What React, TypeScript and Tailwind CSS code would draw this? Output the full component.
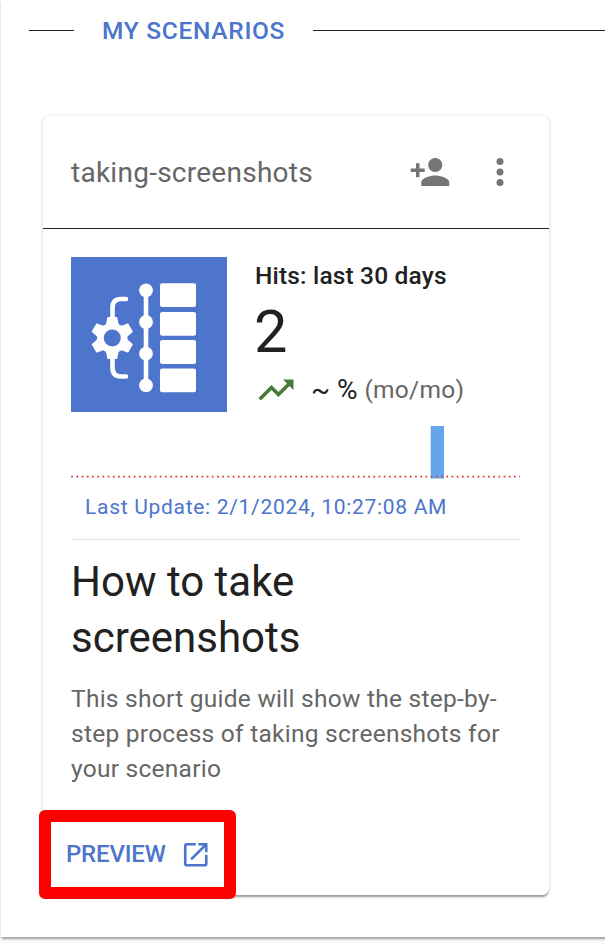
const ELEVATION =
  'shadow-[0_3.5px_1.75px_-1.75px_rgba(0,0,0,0.2),0_1.75px_1.75px_0_rgba(0,0,0,0.14),0_1.75px_5.25px_0_rgba(0,0,0,0.12)]';

function PersonAddIcon() {
  return (
    <svg viewBox="0 0 24 24" className="size-[42px] fill-[#757575]">
      <path d="M15 12c2.21 0 4-1.79 4-4s-1.79-4-4-4-4 1.790-4 4 1.790 4 4 4zm-9-2V7H4v3H1v2h3v3h2v-3h3v-2H6zm9 4c-2.670 0-8 1.340-8 4v2h16v-2c0-2.660-5.330-4-8-4z" />
    </svg>
  );
}

function MoreIcon() {
  return (
    <svg viewBox="0 0 24 24" className="size-[42px] fill-[#757575]">
      <circle cx="12" cy="6" r="2" />
      <circle cx="12" cy="12" r="2" />
      <circle cx="12" cy="18" r="2" />
    </svg>
  );
}

function TrendingUpIcon() {
  return (
    <svg viewBox="0 0 24 24" className="size-[42px] fill-[#467a39]">
      <path d="m16 6 2.290 2.290-4.880 4.880-4-4L2 16.590 3.410 18l6-6 4 4 6.300-6.290L22 12V6z" />
    </svg>
  );
}

function OpenInNewIcon() {
  return (
    <svg viewBox="0 0 24 24" className="size-[31.5px] shrink-0 fill-[#4c75cb]">
      <path d="M19 19H5V5h7V3H5c-1.110 0-2 .9-2 2v14c0 1.100.890 2 2 2h14c1.100 0 2-.9 2-2v-7h-2v7zM14 3v2h3.590l-9.830 9.830 1.410 1.410L19 6.410V10h2V3h-7z" />
    </svg>
  );
}

function ScenarioLogo() {
  return (
    <svg viewBox="0 0 156 155" className="h-[155px] w-[156px] shrink-0 bg-[#4c75cb]">
      <g fill="none" stroke="#fff" strokeWidth="4.6" strokeLinecap="round">
        <path d="M41.500 62V51Q41.500 42 50 42H55" />
        <path d="M41.500 100V110.500Q41.500 119.500 50 119.500H55" />
        <path d="M75 33V128" />
      </g>
      <g transform="translate(41.300 81) scale(0.980)" fill="#fff">
        <circle r="14.8" />
        {[0, 60, 120, 180, 240, 300].map((angle) => (
          <path
            key={angle}
            transform={`rotate(${angle})`}
            d="M-4.400-21.500H4.400Q5-21.500 5.100-21L6.200-15Q6.500-13.800 8-13L0-8-8-13Q-6.500-13.800-6.200-15L-5.100-21Q-5-21.500-4.400-21.500Z"
          />
        ))}
        <circle r="8.700" fill="#4c75cb" />
      </g>
      <g fill="#fff">
        {[33.3, 65, 96.7, 128.3].map((y) => (
          <circle key={y} cx="75" cy={y} r="6.900" />
        ))}
        {[26.2, 54.9, 83, 111.4].map((y) => (
          <rect key={y} x="89" y={y} width="36" height="23.900" rx="2" />
        ))}
      </g>
    </svg>
  );
}

function HitsChart() {
  return (
    <svg viewBox="0 0 450 78" className="block h-[78px] w-[450px]">
      <rect x="359.700" y="14" width="13.300" height="52.500" fill="#64a6ec" />
      <path d="M0.200 64.700H449" stroke="#d0413d" strokeWidth="1.750" strokeDasharray="1.750 3.460" />
    </svg>
  );
}

export default function App() {
  return (
    <div className="h-[945px] w-[605px] overflow-hidden bg-[#fefefe] pl-px font-[Roboto,sans-serif] text-[#212121]">
      <main className={`flex h-[937px] w-[700px] flex-col bg-white ${ELEVATION}`}>
        <div className="flex h-[60px] items-center pl-7">
          <div className="h-px w-[45px] bg-[#212121]" />
          <h2 className="mx-7 pt-0.5 text-[24.5px] font-medium leading-[42px] tracking-[0.7px] whitespace-nowrap text-[#4c75cb]">
            MY SCENARIOS
          </h2>
          <div className="h-px flex-1 bg-[#212121]" />
        </div>

        <article className={`mt-14 ml-[42px] h-[779px] w-[506px] rounded-[7px] bg-white ${ELEVATION}`}>
          <header className="flex h-[113px] items-center border-b border-[#212121] pl-7">
            <h3 className="w-[338px] pt-0.5 text-[28px] leading-[42px] tracking-[0.26px] text-[#666]">taking-screenshots</h3>
            <PersonAddIcon />
            <div className="ml-7">
              <MoreIcon />
            </div>
          </header>

          <div className="px-7 pt-7">
            <div className="flex gap-7">
              <ScenarioLogo />
              <div className="h-[155px]">
                <div className="text-[24.5px] font-medium leading-[38.5px] tracking-[0.17px]">Hits: last 30 days</div>
                <div className="-ml-px h-[73.5px] text-[59.5px] leading-[72px] tracking-[0.44px]">2</div>
                <div className="flex items-center text-[24.5px] leading-[35px] tracking-[0.26px] whitespace-pre">
                  <TrendingUpIcon />
                  <span className="ml-3.5 pb-0.5 text-[28px] tracking-[0px]">~ % </span>
                  <span className="pb-0.5 text-[#666]">(mo/mo)</span>
                </div>
              </div>
            </div>
            <HitsChart />
            <div className="border-b border-[#e0e0e0] pb-3.5 pl-3.5 text-[21px] leading-[35px] tracking-[0.7px] text-[#4c75cb]">
              Last Update: 2/1/2024, 10:27:08 AM
            </div>
            <h1 className="mt-3.5 text-[42px] leading-14">
              How to take
              <br />
              screenshots
            </h1>
            <p className="mt-[15px] text-[24.5px] leading-[35px] tracking-[0.26px] text-[#666]">
              This short guide will show the step-by-step process of taking screenshots for your scenario
            </p>
          </div>

          <div className="mt-6 -ml-1 flex h-[89px] w-[197px] items-center rounded-[6px] border-12 border-[#fe0000] bg-white pl-[15px] text-[24px] font-medium text-[#4c75cb]">
            <span className="w-[114px] pb-0.5 tracking-[-0.2px]">PREVIEW</span>
            <OpenInNewIcon />
          </div>
        </article>
      </main>
    </div>
  );
}
